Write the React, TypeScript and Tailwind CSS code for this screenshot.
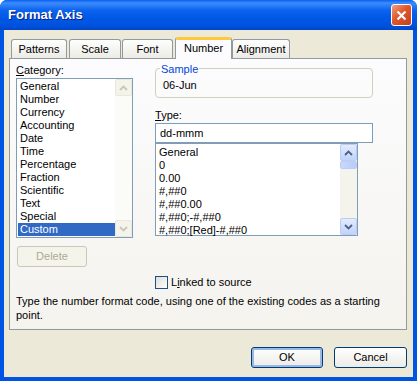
import * as React from "react";

const categories = [
  "General",
  "Number",
  "Currency",
  "Accounting",
  "Date",
  "Time",
  "Percentage",
  "Fraction",
  "Scientific",
  "Text",
  "Special",
  "Custom",
];

const formats = [
  "General",
  "0",
  "0.00",
  "#,##0",
  "#,##0.00",
  "#,##0;-#,##0",
  "#,##0;[Red]-#,##0",
];

function Arrow({ up, color }: { up: boolean; color: string }) {
  return (
    <svg width="9" height="6" viewBox="0 0 9 6" aria-hidden="true">
      <path
        d={up ? "M1 5 L4.5 1.5 L8 5" : "M1 1 L4.5 4.5 L8 1"}
        fill="none"
        stroke={color}
        strokeWidth="1.8"
      />
    </svg>
  );
}

function Tab({ label, width, active }: { label: string; width: string; active?: boolean }) {
  if (active) {
    return (
      <div
        className={`${width} relative z-10 -mb-px flex h-[22px] flex-col rounded-t-[3px] border-x border-[#919B9C] bg-[#FCFCFE]`}
      >
        <div className="h-[3px] rounded-t-[3px] bg-[#FFC83C]" />
        <div className="flex flex-1 items-center justify-center pb-[2px]">{label}</div>
      </div>
    );
  }
  return (
    <div
      className={`${width} flex h-[19px] items-center justify-center rounded-t-[3px] border-x border-t border-[#919B9C] bg-[linear-gradient(#FEFEFE,#ECEBE6)]`}
    >
      {label}
    </div>
  );
}

export default function App() {
  return (
    <div
      className="flex h-[381px] w-[417px] flex-col rounded-t-[7px] bg-[#0054E3] text-[11px] text-black"
      style={{ fontFamily: "'Liberation Sans', Arial, sans-serif" }}
    >
      {/* title bar */}
      <div className="flex h-[30px] items-center justify-between rounded-t-[7px] bg-[linear-gradient(#0A5FF5,#3D8CFA_10%,#0A62EE_35%,#0058E6_60%,#0052DE_85%,#0046C4)] pl-[8px] pr-[5px]">
        <span className="text-[13px] font-bold text-white [text-shadow:1px_1px_0_#0A1E80]">
          Format Axis
        </span>
        <div className="flex h-[22px] w-[21px] items-center justify-center rounded-[3px] border border-white bg-[linear-gradient(135deg,#F0A080,#E0562C_45%,#C4401A)]">
          <svg width="11" height="11" viewBox="0 0 11 11" aria-hidden="true">
            <path d="M1.5 1.5 L9.5 9.5 M9.5 1.5 L1.5 9.5" stroke="white" strokeWidth="2.2" />
          </svg>
        </div>
      </div>

      {/* body */}
      <div className="mx-[4px] mb-[4px] flex flex-1 flex-col bg-[#ECE9D8] pl-[5px] pr-[6px] pt-[7px]">
        <div className="flex items-end pl-[2px]">
          <Tab label="Patterns" width="w-[56px]" />
          <div className="w-[2px]" />
          <Tab label="Scale" width="w-[52px]" />
          <div className="w-[1px]" />
          <Tab label="Font" width="w-[51px]" />
          <div className="w-[2px]" />
          <Tab label="Number" width="w-[57px]" active />
          <Tab label="Alignment" width="w-[58px]" />
        </div>

        {/* tab panel */}
        <div className="flex h-[272px] flex-col border border-[#919B9C] bg-[linear-gradient(#FCFCFE,#F4F3EE)] pl-[6px] pr-[20px] pt-[4px]">
          <div className="flex">
            {/* category column */}
            <div className="flex w-[139px] flex-col">
              <div className="h-[15px] leading-[15px]">
                <span className="underline">C</span>ategory:
              </div>
              <div className="flex h-[160px] w-[117px] border border-[#7F9DB9] bg-white">
                <div className="flex flex-1 flex-col pl-[1px] pt-[1px]">
                  {categories.map((c) => (
                    <div
                      key={c}
                      className={`h-[13px] pl-[2px] leading-[13px] ${
                        c === "Custom" ? "bg-[#316AC5] text-white" : ""
                      }`}
                    >
                      {c}
                    </div>
                  ))}
                </div>
                <div className="flex w-[17px] flex-col justify-between bg-[#FBFBF8]">
                  <div className="flex h-[17px] items-center justify-center rounded-[2px] border border-[#E8E8DF] bg-[#F5F4EA]">
                    <Arrow up color="#C9C7BA" />
                  </div>
                  <div className="flex h-[17px] items-center justify-center rounded-[2px] border border-[#E8E8DF] bg-[#F5F4EA]">
                    <Arrow up={false} color="#C9C7BA" />
                  </div>
                </div>
              </div>
              <div className="ml-[1px] mt-[8px] flex h-[21px] w-[70px] items-center justify-center rounded-[3px] border border-[#C9C7BA] bg-[#F5F4EA] text-[#ACA899]">
                Delete
              </div>
            </div>

            {/* type column */}
            <div className="flex w-[218px] flex-col pt-[5px]">
              <div className="relative h-[30px] w-[218px] rounded-[4px] border border-[#D0D0BF]">
                <span className="absolute -top-[8px] left-[4px] bg-[#FCFCFE] px-[1px] text-[#0046D5]">
                  Sample
                </span>
                <div className="pl-[7px] pt-[10px] leading-[13px]">06-Jun</div>
              </div>
              <div className="mt-[10px] h-[14px] leading-[14px]">
                <span className="underline">T</span>ype:
              </div>
              <div className="mt-[1px] flex h-[20px] w-[218px] items-center border border-[#7F9DB9] bg-white pl-[4px]">
                dd-mmm
              </div>
              <div className="flex h-[93px] w-[203px] border border-[#7F9DB9] bg-white">
                <div className="flex flex-1 flex-col pl-[3px] pt-[2px]">
                  {formats.map((f) => (
                    <div key={f} className="h-[13px] whitespace-nowrap leading-[13px]">
                      {f}
                    </div>
                  ))}
                </div>
                <div className="flex w-[17px] flex-col bg-[#F4F3EC]">
                  <div className="flex h-[17px] items-center justify-center rounded-[2px] border border-[#BCCDF5] bg-[linear-gradient(#E3ECFD,#C1D3FB)]">
                    <Arrow up color="#4D6185" />
                  </div>
                  <div className="h-[8px] rounded-[2px] border border-[#BCCDF5] bg-[linear-gradient(90deg,#C8D7FC,#B8CCF9)]" />
                  <div className="flex-1" />
                  <div className="flex h-[17px] items-center justify-center rounded-[2px] border border-[#BCCDF5] bg-[linear-gradient(#E3ECFD,#C1D3FB)]">
                    <Arrow up={false} color="#4D6185" />
                  </div>
                </div>
              </div>
            </div>
          </div>

          <div className="mt-[7px] flex items-center pl-[139px]">
            <div className="h-[13px] w-[13px] border border-[#1C5180] bg-[linear-gradient(135deg,#DCDCD7,#FFFFFF)]" />
            <span className="ml-[3px]">
              L<span className="underline">i</span>nked to source
            </span>
          </div>
          <div className="mt-[3px] w-[368px] leading-[14px]">
            Type the number format code, using one of the existing codes as a starting point.
          </div>
        </div>

        {/* buttons */}
        <div className="flex justify-end gap-[11px] pt-[17px]">
          <div className="flex h-[21px] w-[72px] items-center justify-center rounded-[3px] border border-[#003C74] bg-[linear-gradient(#FFFFFF,#ECEBE6)] shadow-[inset_0_0_0_2px_#98B8EA]">
            OK
          </div>
          <div className="flex h-[21px] w-[73px] items-center justify-center rounded-[3px] border border-[#003C74] bg-[linear-gradient(#FFFFFF,#ECEBE6)]">
            Cancel
          </div>
        </div>
      </div>
    </div>
  );
}
